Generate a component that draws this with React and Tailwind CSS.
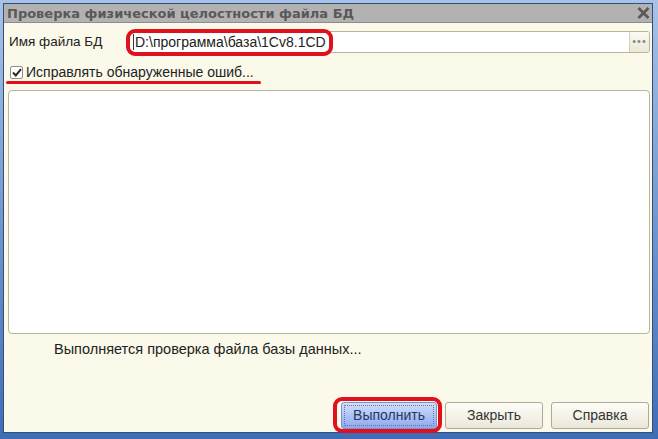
import React from 'react'

const font = { fontFamily: '"Liberation Sans", Arial, sans-serif' }

const CheckMark = () => (
    <svg width="10" height="9" viewBox="0 0 10 9">
        <path d="M1 4.5 L3.8 7.5 L9 1.2" fill="none" stroke="#2a2a2a" strokeWidth="2" />
    </svg>
)

const CloseIcon = () => (
    <svg width="13" height="12" viewBox="0 0 13 12">
        <path d="M1.5 1 L11.5 11 M11.5 1 L1.5 11" stroke="#5a5a5a" strokeWidth="2.8" />
    </svg>
)

export default function App() {
    return (
        <div className="relative w-[658px] h-[439px] overflow-hidden bg-[#4a78bd] text-[14.5px] text-[#222]" style={font}>
            <div className="flex flex-col h-full pt-[3px] pl-[3px] pr-[5px] pb-[6px] bg-gradient-to-b from-[#a9c3e6] to-[#3f6db5]">
                <div className="flex flex-col h-full border border-[#2f4f7f]">
                    {/* title bar */}
                    <div className="flex items-center justify-between h-[19px] bg-[#b2b2b2] border-b border-[#8c8c8c] pl-[3px] pr-[2px]">
                        <span className="font-bold text-[13px] text-[#595959] leading-none" style={{ fontFamily: '"DejaVu Sans", sans-serif' }}>
                            Проверка физической целостности файла БД
                        </span>
                        <CloseIcon />
                    </div>

                    {/* body */}
                    <div className="flex-1 flex flex-col bg-[#fbf9ea] pl-[4px] pr-[2px]">
                        <div className="flex items-center mt-[8px] h-[22px]">
                            <span className="w-[120px] pl-[1px] text-[13.5px]">Имя файла БД</span>
                            <div className="flex-1 flex h-[22px] bg-white border border-[#b9b59c] rounded-[3px] overflow-hidden">
                                <div className="flex-1 flex items-center pl-[4px]">
                                    <span className="border-l border-[#333] pl-[1px] leading-[16px] text-[14px]">D:\программа\база\1Cv8.1CD</span>
                                </div>
                                <div className="w-[20px] flex items-end justify-center pb-[5px] border-l border-[#d4d0bb] bg-gradient-to-b from-[#fbfaf4] to-[#ebe8d8] text-[#8a8670] text-[11px] leading-none tracking-[1px]">
                                    •••
                                </div>
                            </div>
                        </div>

                        <div className="flex items-center mt-[11px] h-[16px] pl-[2px]">
                            <div className="w-[13px] h-[13px] flex items-center justify-center bg-white border border-[#8f8f8f] rounded-[2px]">
                                <CheckMark />
                            </div>
                            <span className="ml-[3px] text-[14px]">Исправлять обнаруженные ошиб...</span>
                        </div>

                        <div className="mt-[10px] h-[244px] bg-white border border-[#b9b59c] rounded-[4px]" />

                        <div className="pl-[46px] mt-[5px]">Выполняется проверка файла базы данных...</div>

                        <div className="flex-1" />

                        <div className="flex justify-end gap-[8px] mb-[3px] pr-[1px] text-[14px]">
                            <button className="w-[96px] h-[27px] rounded-[3px] border border-[#7e93c9] bg-gradient-to-b from-[#d2e0fc] to-[#8da8ef] text-[#283760] p-[2px]">
                                <div className="h-full flex items-center justify-center border border-dotted border-[#6a76a0]">Выполнить</div>
                            </button>
                            <button className="w-[98px] h-[27px] rounded-[3px] border border-[#aeaa96] bg-gradient-to-b from-[#fefdf8] to-[#ebe8da] text-[#333]">
                                Закрыть
                            </button>
                            <button className="w-[98px] h-[27px] rounded-[3px] border border-[#aeaa96] bg-gradient-to-b from-[#fefdf8] to-[#ebe8da] text-[#333]">
                                Справка
                            </button>
                        </div>
                    </div>
                </div>
            </div>

            {/* red annotations */}
            <div className="absolute left-[126px] top-[29px] w-[207px] h-[27px] border-[4px] border-[#e0101c] rounded-[9px]" />
            <div className="absolute left-[6px] top-[81px] w-[255px] h-[3px] bg-[#e0101c] rounded-full" />
            <div className="absolute left-[333px] top-[397px] w-[109px] h-[36px] border-[4px] border-[#e0101c] rounded-[9px]" />
        </div>
    )
}
